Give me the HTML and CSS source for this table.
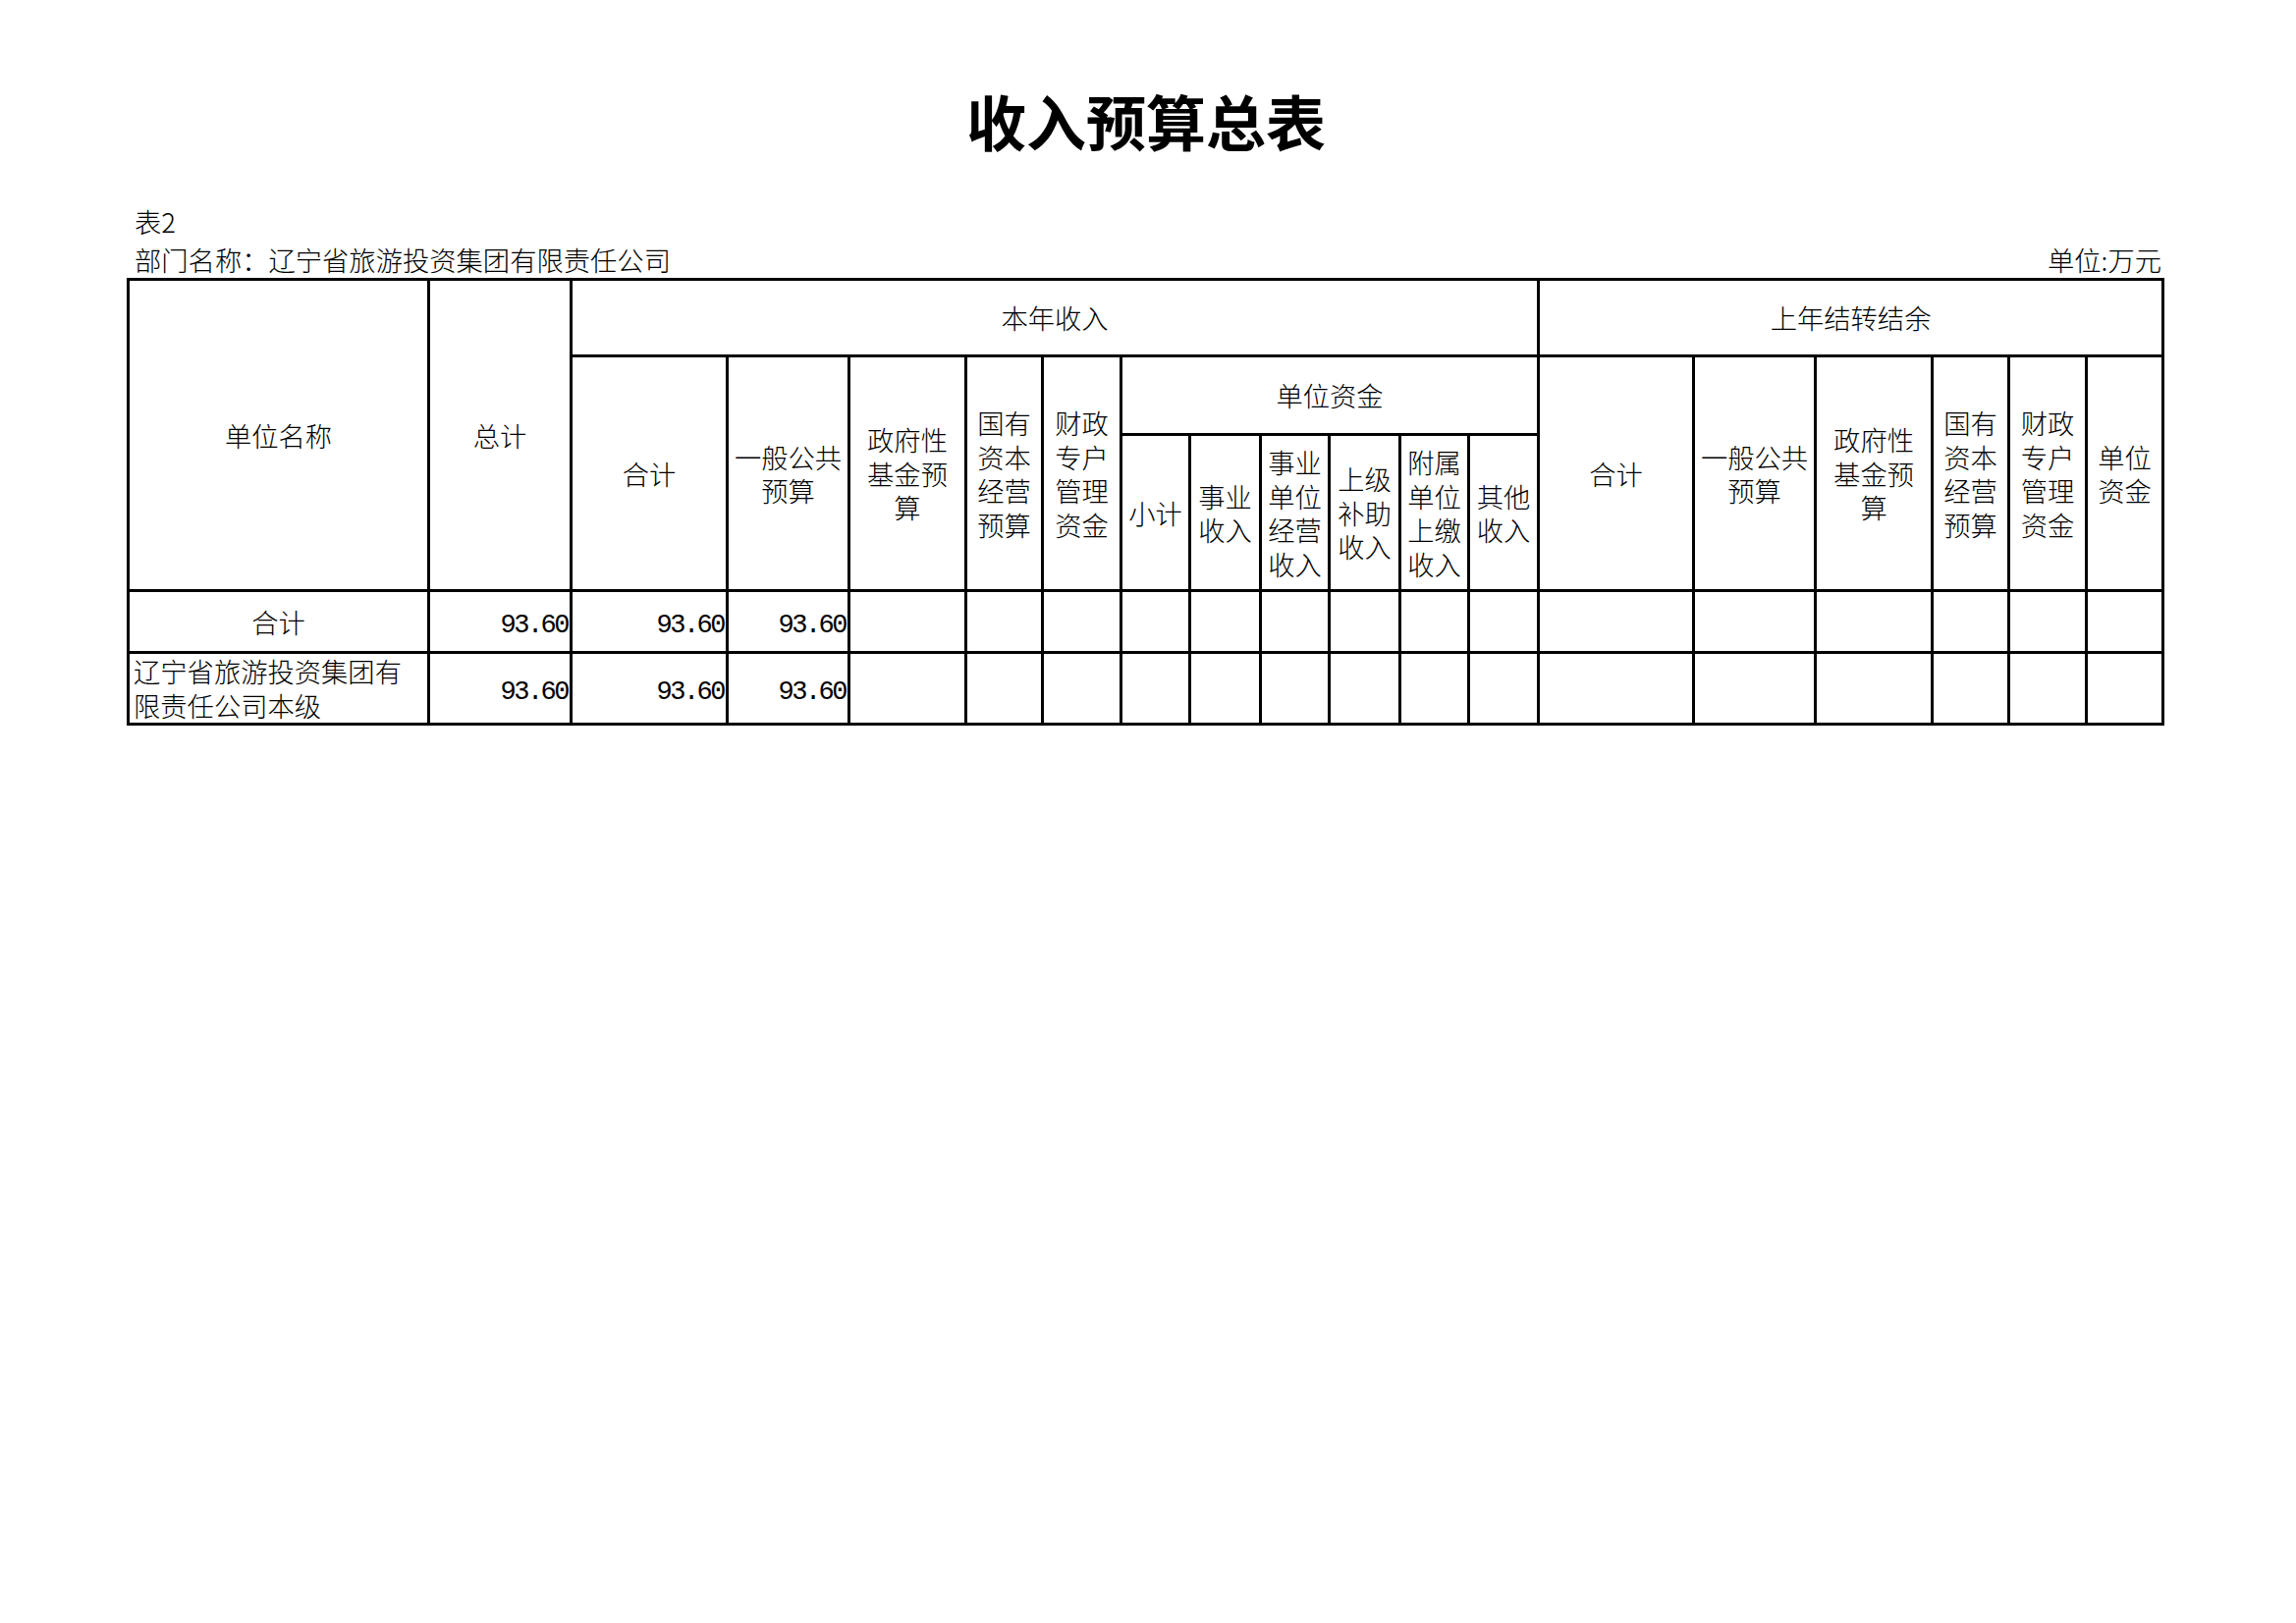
FILE: index.html
```html
<!DOCTYPE html>
<html lang="zh-CN">
<head>
<meta charset="utf-8">
<title>收入预算总表</title>
<link rel="stylesheet" href="styles.css">
</head>
<body>
<div class="page">
  <h1 class="title">收入预算总表</h1>
  <div class="meta">
    <div class="meta-line">表2</div>
    <div class="meta-row">
      <span>部门名称：辽宁省旅游投资集团有限责任公司</span>
      <span>单位:万元</span>
    </div>
  </div>
  <table class="grid">
    <colgroup>
      <col style="width:306px"><col style="width:145px"><col style="width:159px"><col style="width:124px"><col style="width:119px"><col style="width:78px"><col style="width:80px"><col style="width:70px"><col style="width:72px"><col style="width:70px"><col style="width:72px"><col style="width:70px"><col style="width:71px"><col style="width:158px"><col style="width:124px"><col style="width:119px"><col style="width:78px"><col style="width:79px"><col style="width:78px">
    </colgroup>
    <thead>
      <tr class="h1">
        <th rowspan="3">单位名称</th>
        <th rowspan="3">总计</th>
        <th colspan="11">本年收入</th>
        <th colspan="6">上年结转结余</th>
      </tr>
      <tr class="h2">
        <th rowspan="2">合计</th>
        <th rowspan="2">一般公共预算</th>
        <th rowspan="2">政府性基金预算</th>
        <th rowspan="2">国有资本经营预算</th>
        <th rowspan="2">财政专户管理资金</th>
        <th colspan="6">单位资金</th>
        <th rowspan="2">合计</th>
        <th rowspan="2">一般公共预算</th>
        <th rowspan="2">政府性基金预算</th>
        <th rowspan="2">国有资本经营预算</th>
        <th rowspan="2">财政专户管理资金</th>
        <th rowspan="2">单位资金</th>
      </tr>
      <tr class="h3">
        <th>小计</th>
        <th>事业收入</th>
        <th>事业单位经营收入</th>
        <th>上级补助收入</th>
        <th>附属单位上缴收入</th>
        <th>其他收入</th>
      </tr>
    </thead>
    <tbody>
      <tr class="r1">
        <td class="center">合计</td>
        <td class="num">93.60</td>
        <td class="num">93.60</td>
        <td class="num">93.60</td>
        <td></td><td></td><td></td><td></td><td></td><td></td><td></td><td></td><td></td>
        <td></td><td></td><td></td><td></td><td></td><td></td>
      </tr>
      <tr class="r2">
        <td class="name">辽宁省旅游投资集团有限责任公司本级</td>
        <td class="num">93.60</td>
        <td class="num">93.60</td>
        <td class="num">93.60</td>
        <td></td><td></td><td></td><td></td><td></td><td></td><td></td><td></td><td></td>
        <td></td><td></td><td></td><td></td><td></td><td></td>
      </tr>
    </tbody>
  </table>
</div>
</body>
</html>
```

FILE: styles.css
```css
html, body {
  margin: 0;
  padding: 0;
  background: #ffffff;
}

body {
  font-family: "Noto Sans CJK SC", "Noto Sans", sans-serif;
  color: #000000;
}

.page {
  width: 2076px;
  margin-left: 129px;
  padding-top: 86px;
}

.title {
  margin: 0;
  text-align: center;
  font-size: 61px;
  line-height: 74px;
  font-weight: 700;
}

.meta {
  margin-top: 46px;
  font-size: 27.3px;
  font-weight: 300;
}

.meta-line {
  height: 38px;
  line-height: 38px;
  padding-left: 8px;
}

.meta-row {
  display: flex;
  justify-content: space-between;
  height: 39px;
  line-height: 40px;
  padding-left: 8px;
  padding-right: 4px;
}

.grid {
  border-collapse: collapse;
  table-layout: fixed;
  width: 2075px;
  font-size: 27.3px;
  font-weight: 300;
}

.grid th,
.grid td {
  border: 3px solid #000000;
  padding: 0 4px;
  line-height: 34.5px;
  text-align: center;
  vertical-align: middle;
  font-weight: 300;
  overflow: hidden;
}

.h1 { height: 78px; }
.h2 { height: 80px; }
.h3 { height: 159px; }
.r1 { height: 63px; }
.r2 { height: 72px; }

.grid td.num {
  text-align: right;
  font-family: "Liberation Mono", monospace;
  font-size: 27px;
  letter-spacing: -2.5px;
  padding-right: 2px;
  padding-top: 9px;
}

.grid td.name {
  text-align: left;
  padding-left: 4px;
  line-height: 35px;
}
```
